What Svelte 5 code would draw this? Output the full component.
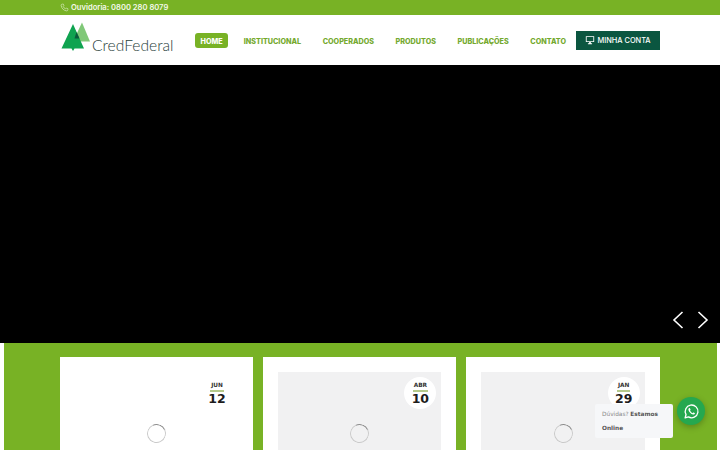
<script>
  const menu = ['INSTITUCIONAL', 'COOPERADOS', 'PRODUTOS', 'PUBLICAÇÕES', 'CONTATO'];
  const news = [
    { month: 'JUN', day: '12', blank: true },
    { month: 'ABR', day: '10', blank: false },
    { month: 'JAN', day: '29', blank: false }
  ];
</script>

<div class="page">
  <div class="topbar">
    <div class="wrap">
      <svg class="phone" viewBox="0 0 24 24" width="9" height="9"><path d="M6 3 L9 3 L10.500 7.500 L8.500 9.500 C9.500 12 12 14.500 14.500 15.500 L16.500 13.500 L21 15 L21 18 C21 20 19.500 21 18 21 C10 20.500 3.500 14 3 6 C3 4.500 4 3 6 3 Z" fill="none" stroke="#c9e2a6" stroke-width="2.200"/></svg>
      <span>Ouvidoria: 0800 280 8079</span>
    </div>
  </div>

  <header>
    <div class="wrap head">
      <div class="logo">
        <svg viewBox="0 0 30 30" width="30" height="30">
          <path d="M21 0.500 L29 19.500 L12 19.500 Z" fill="#80c878"/>
          <path d="M12 2 L23 26.500 L13.500 26.500 L12 29 L10.500 26.500 L0.500 26.500 Z" fill="#0fa350"/>
          <path d="M15.500 10 L18.500 16.500 L13.500 16.500 Z" fill="#0b5a3c"/>
        </svg>
        <span class="brand">CredFederal</span>
      </div>
      <nav>
        <a class="item active" href="#home">HOME</a>
        {#each menu as label}
          <a class="item" href="#menu">{label}</a>
        {/each}
        <a class="account" href="#conta">
          <svg viewBox="0 0 24 24" width="10" height="10"><path d="M2 3 H22 V17 H14 V20 H17 V22 H7 V20 H10 V17 H2 Z M4 5 V15 H20 V5 Z" fill="#fff" fill-rule="evenodd"/></svg>
          MINHA CONTA
        </a>
      </nav>
    </div>
  </header>

  <section class="slider">
    <div class="arrows">
      <svg viewBox="0 0 12 20" width="12" height="20"><path d="M10.500 2 L2 10 L10.500 18" fill="none" stroke="#fff" stroke-width="1.600"/></svg>
      <svg viewBox="0 0 12 20" width="12" height="20"><path d="M1.500 2 L10 10 L1.500 18" fill="none" stroke="#fff" stroke-width="1.600"/></svg>
    </div>
  </section>

  <section class="news">
    <div class="cards">
      {#each news as n}
        <article class="card">
          <div class="thumb" class:blank={n.blank}>
            <div class="date">
              <span class="month">{n.month}</span>
              <span class="day">{n.day}</span>
            </div>
            <div class="spinner"></div>
          </div>
        </article>
      {/each}
    </div>
  </section>

  <div class="chat">Dúvidas? <b>Estamos</b> <b>Online</b></div>
  <div class="whats">
    <svg viewBox="0 0 24 24" width="17" height="17">
      <path d="M3 21 L4.300 16.300 A9 9 0 1 1 7.700 19.700 Z" fill="none" stroke="#fff" stroke-width="1.900" stroke-linejoin="round"/>
      <path d="M9 7.200 C8 7.500 7.400 8.700 7.700 10 C8.300 12.700 11.300 15.800 14.200 16.300 C15.400 16.500 16.500 15.900 16.800 14.900 C16.900 14.500 16.800 14.300 16.500 14.100 L14.900 13.300 C14.600 13.200 14.400 13.200 14.200 13.500 L13.500 14.300 C12 13.700 10.500 12.300 9.900 10.700 L10.500 10 C10.700 9.800 10.700 9.500 10.600 9.300 L9.900 7.600 C9.700 7.200 9.400 7.100 9 7.200 Z" fill="#fff"/>
    </svg>
  </div>
</div>

<style>
  :global(body) {
    margin: 0;
    background: #fff;
  }

  .page {
    position: relative;
    width: 720px;
    height: 450px;
    overflow: hidden;
    font-family: "DejaVu Sans", sans-serif;
  }

  .wrap {
    width: 600px;
    margin: 0 auto;
    display: flex;
    align-items: center;
  }

  .topbar {
    height: 15px;
    background: #78b225;
    color: #f4f9ea;
    font-family: "Inter", sans-serif;
    font-size: 7.600px;
    font-weight: 600;
    line-height: 15px;
  }

  .phone {
    margin-right: 2px;
  }

  header {
    height: 50px;
    background: #fff;
  }

  .head {
    height: 50px;
    justify-content: space-between;
  }

  .logo {
    display: flex;
    align-items: flex-end;
    align-self: flex-start;
    margin: 7px 0 0 1px;
    height: 30px;
  }

  .brand {
    font-family: "Lato", sans-serif;
    font-weight: 300;
    font-size: 15.600px;
    line-height: 18px;
    color: #1f403a;
    margin-left: 1px;
    margin-bottom: -2px;
  }

  nav {
    display: flex;
    align-items: center;
    height: 50px;
    gap: 21.600px;
  }

  .item {
    font-family: "Inter", sans-serif;
    font-size: 7.200px;
    font-weight: 800;
    color: #74a92e;
    text-decoration: none;
    line-height: 9px;
    padding-top: 2px;
  }

  .active {
    background: #78b225;
    color: #fff;
    padding: 4px 5.500px 2px;
    margin-right: -6px;
    border-radius: 3px;
  }

  .account {
    display: flex;
    align-items: center;
    gap: 2px;
    width: 84px;
    height: 19px;
    margin-left: -11.600px;
    justify-content: center;
    background: #0b5640;
    color: #fff;
    font-family: "Inter", sans-serif;
    font-size: 7.400px;
    font-weight: 500;
    text-decoration: none;
  }

  .slider {
    position: relative;
    height: 278px;
    background: #000;
  }

  .arrows {
    position: absolute;
    right: 11px;
    bottom: 13px;
    display: flex;
    gap: 13px;
  }

  .news {
    height: 107px;
    margin: 0 3px 0 4px;
    background: #78b225;
    padding-top: 14px;
    box-sizing: border-box;
  }

  .cards {
    display: flex;
    gap: 10px;
    width: 600px;
    margin-left: 55.700px;
  }

  .card {
    flex: 1;
    height: 93px;
    background: #fff;
    padding: 15px 15px 0;
    box-sizing: border-box;
  }

  .thumb {
    position: relative;
    height: 78px;
    background: #f1f1f2;
  }

  .thumb.blank {
    background: #fff;
  }

  .date {
    position: absolute;
    top: 5px;
    right: 5px;
    width: 32px;
    height: 32px;
    border-radius: 50%;
    background: #fff;
    display: flex;
    flex-direction: column;
    align-items: center;
    justify-content: center;
    color: #222;
  }

  .month {
    font-size: 5.800px;
    font-weight: 700;
    line-height: 7px;
    border-bottom: 2px solid #b5c98a;
    padding: 0 1px 1px;
    color: #333;
  }

  .day {
    font-size: 12.500px;
    font-weight: 700;
    line-height: 13px;
    color: #1c1c1c;
  }

  .spinner {
    position: absolute;
    left: 50%;
    top: 52px;
    width: 17px;
    height: 17px;
    margin-left: -9.500px;
    border: 1px solid #cacaca;
    border-top-color: #8c8c8c;
    border-radius: 50%;
    transform: rotate(20deg);
  }

  .chat {
    position: absolute;
    left: 595px;
    top: 404px;
    width: 78px;
    height: 34px;
    padding: 3px 7px;
    box-sizing: border-box;
    background: #f6f7f9;
    border-radius: 2px;
    font-size: 5.800px;
    line-height: 14px;
    color: #888;
  }

  .chat b {
    color: #555;
  }

  .whats {
    position: absolute;
    left: 677px;
    top: 397px;
    width: 28px;
    height: 28px;
    border-radius: 50%;
    background: #25a84f;
    box-shadow: 0 2px 6px rgba(0, 0, 0, 0.25);
    display: flex;
    align-items: center;
    justify-content: center;
  }
</style>
